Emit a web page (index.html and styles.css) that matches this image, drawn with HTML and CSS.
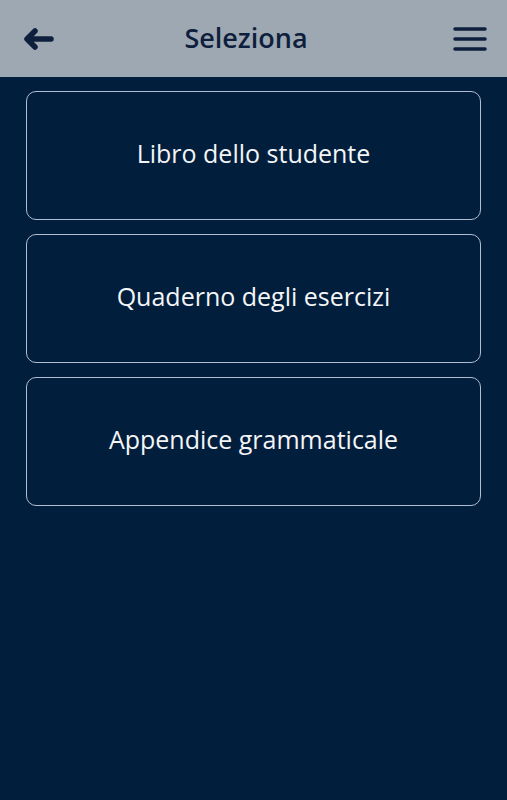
FILE: index.html
```html
<!DOCTYPE html>
<html>
<head>
<meta charset="utf-8">
<meta name="viewport" content="width=device-width, initial-scale=1">
<title>Seleziona</title>
<link rel="stylesheet" href="styles.css">
</head>
<body>
  <div class="topbar">
    <a class="tb-btn back" href="#">
      <svg width="32" height="24" viewBox="0 0 32 24">
        <path d="M12 4 L4 12 L12 20 M5 12 H28" fill="none" stroke="#0e1f3d" stroke-width="5.5" stroke-linecap="round" stroke-linejoin="round"/>
      </svg>
    </a>
    <div class="title">Seleziona</div>
    <a class="tb-btn menu" href="#">
      <svg width="34" height="24" viewBox="0 0 34 24">
        <path d="M2 2 H32 M2 12 H32 M2 22 H32" fill="none" stroke="#0e1f3d" stroke-width="3.5" stroke-linecap="round"/>
      </svg>
    </a>
  </div>

  <div class="list">
    <a class="item" href="#">Libro dello studente</a>
    <a class="item" href="#">Quaderno degli esercizi</a>
    <a class="item" href="#">Appendice grammaticale</a>
  </div>
</body>
</html>
```

FILE: styles.css
```css
html, body {
  margin: 0;
  padding: 0;
  height: 100%;
  background: #011e3c;
  font-family: "Open Sans", "Noto Sans", sans-serif;
}

.topbar {
  height: 77px;
  background: #9ea8b3;
  display: flex;
  align-items: center;
  justify-content: space-between;
  padding: 0 20px 0 23px;
}

.tb-btn { display: flex; align-items: center; }

.title {
  font-size: 27px;
  font-weight: 600;
  color: #0e1f3d;
  margin-right: 16px;
  margin-top: -2px;
}

.list {
  display: flex;
  flex-direction: column;
  gap: 14px;
  padding: 14px 26px 0 26px;
}

.item {
  height: 122px;
  padding-bottom: 5px;
  border: 1.5px solid #b2bdd0;
  border-radius: 10px;
  display: flex;
  align-items: center;
  justify-content: center;
  color: #f4f5f7;
  font-size: 25px;
  text-decoration: none;
}
```
